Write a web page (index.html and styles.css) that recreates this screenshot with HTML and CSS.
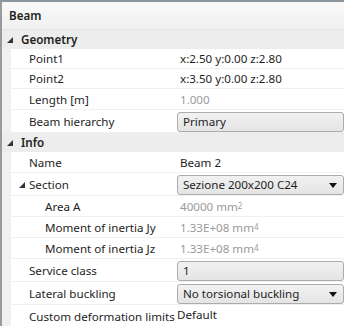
FILE: index.html
```html
<!DOCTYPE html>
<html lang="en">
<head>
    <meta charset="UTF-8">
    <title>Beam properties</title>
    <link rel="stylesheet" href="styles.css">
</head>
<body>
    <div class="painel">
        <div class="titulo">Beam</div>

        <div class="categoria">
            <svg class="seta" width="6" height="6" viewBox="0 0 6 6"><polygon points="6,0 6,6 0,6"/></svg>
            Geometry
        </div>
        <div class="linha"><div class="nome">Point1</div><div class="valor">x:2.50 y:0.00 z:2.80</div></div>
        <div class="linha"><div class="nome">Point2</div><div class="valor">x:3.50 y:0.00 z:2.80</div></div>
        <div class="linha alta"><div class="nome">Length [m]</div><div class="valor cinza">1.000</div></div>
        <div class="linha combo-linha"><div class="nome">Beam hierarchy</div><div class="valor"><div class="combo">Primary</div></div></div>

        <div class="categoria">
            <svg class="seta" width="6" height="6" viewBox="0 0 6 6"><polygon points="6,0 6,6 0,6"/></svg>
            Info
        </div>
        <div class="linha alta"><div class="nome">Name</div><div class="valor">Beam 2</div></div>
        <div class="linha combo-linha">
            <div class="nome sub"><svg class="seta" width="6" height="6" viewBox="0 0 6 6"><polygon points="6,0 6,6 0,6"/></svg>Section</div>
            <div class="valor"><div class="combo">Sezione 200x200 C24<span class="abrir"></span></div></div>
        </div>
        <div class="linha alta"><div class="nome filho">Area A</div><div class="valor cinza">40000 mm<sup>2</sup></div></div>
        <div class="linha alta"><div class="nome filho">Moment of inertia Jy</div><div class="valor cinza">1.33E+08 mm<sup>4</sup></div></div>
        <div class="linha alta"><div class="nome filho">Moment of inertia Jz</div><div class="valor cinza">1.33E+08 mm<sup>4</sup></div></div>
        <div class="linha combo-linha"><div class="nome">Service class</div><div class="valor"><div class="combo">1</div></div></div>
        <div class="linha combo-linha"><div class="nome">Lateral buckling</div><div class="valor"><div class="combo">No torsional buckling<span class="abrir"></span></div></div></div>
        <div class="linha ultima"><div class="nome">Custom deformation limits</div><div class="valor padrao">Default</div></div>
    </div>
</body>
</html>
```

FILE: styles.css
```css
body {
    margin: 0;
    font-family: "Noto Sans", "Open Sans", sans-serif;
    font-size: 11.6px;
    color: #1e1e1e;
    background-color: #ffffff;
}
.painel {
    width: 344px;
    height: 326px;
    overflow: hidden;
    border-top: 2px solid #8b959e;
    border-left: 2px solid #9a9a9a;
    box-sizing: border-box;
    background-color: #f0f0f0; /* coluna da esquerda */
}
.titulo {
    height: 27px;
    line-height: 27px;
    padding-left: 7px;
    font-weight: 600;
    background: linear-gradient(#f9f9f9, #f1f1f1);
    border-bottom: 1px solid #e4e4e4;
}
.categoria {
    height: 19px;
    display: flex;
    align-items: center;
    font-weight: 600;
    background-color: #ededed;
}
.seta {
    fill: #333;
    margin: 0 8px 0 5px;
}
.linha {
    display: flex;
    height: 20px;
    margin-left: 9px;
    background-color: #ffffff;
    border-bottom: 1px solid #f0f0f0;
    box-sizing: border-box;
}
.linha.alta {
    height: 21px;
}
.combo-linha {
    height: 23px;
    padding-top: 1px;
}
.nome {
    width: 166px;
    flex: none;
    padding-left: 18px;
    box-sizing: border-box;
    display: flex;
    align-items: center;
    white-space: nowrap;
}
.nome.sub {
    padding-left: 8px;
}
.nome.sub .seta {
    margin: 0 4px 0 0;
}
.nome.filho {
    padding-left: 34px;
}
.valor {
    flex: 1;
    display: flex;
    align-items: center;
    padding-left: 3px;
    white-space: nowrap;
}
.cinza {
    color: #9a9a9a;
}
.cinza sup {
    font-size: 8px;
    vertical-align: 5px;
    line-height: 0;
}
.combo-linha .valor {
    padding-left: 0;
}
.combo {
    position: relative;
    width: 100%;
    height: 20px;
    line-height: 18px;
    box-sizing: border-box;
    padding-left: 5px;
    border: 1px solid #acacac;
    border-radius: 3px;
    background: linear-gradient(#f2f2f2, #e4e4e4);
}
.abrir {
    position: absolute;
    right: 6px;
    top: 7px;
    border-left: 4px solid transparent;
    border-right: 4px solid transparent;
    border-top: 5px solid #111;
}
.ultima {
    height: 22px;
    border-bottom: none;
}
.padrao {
    padding-left: 0;
    align-items: flex-start;
    padding-top: 2px;
}
```
